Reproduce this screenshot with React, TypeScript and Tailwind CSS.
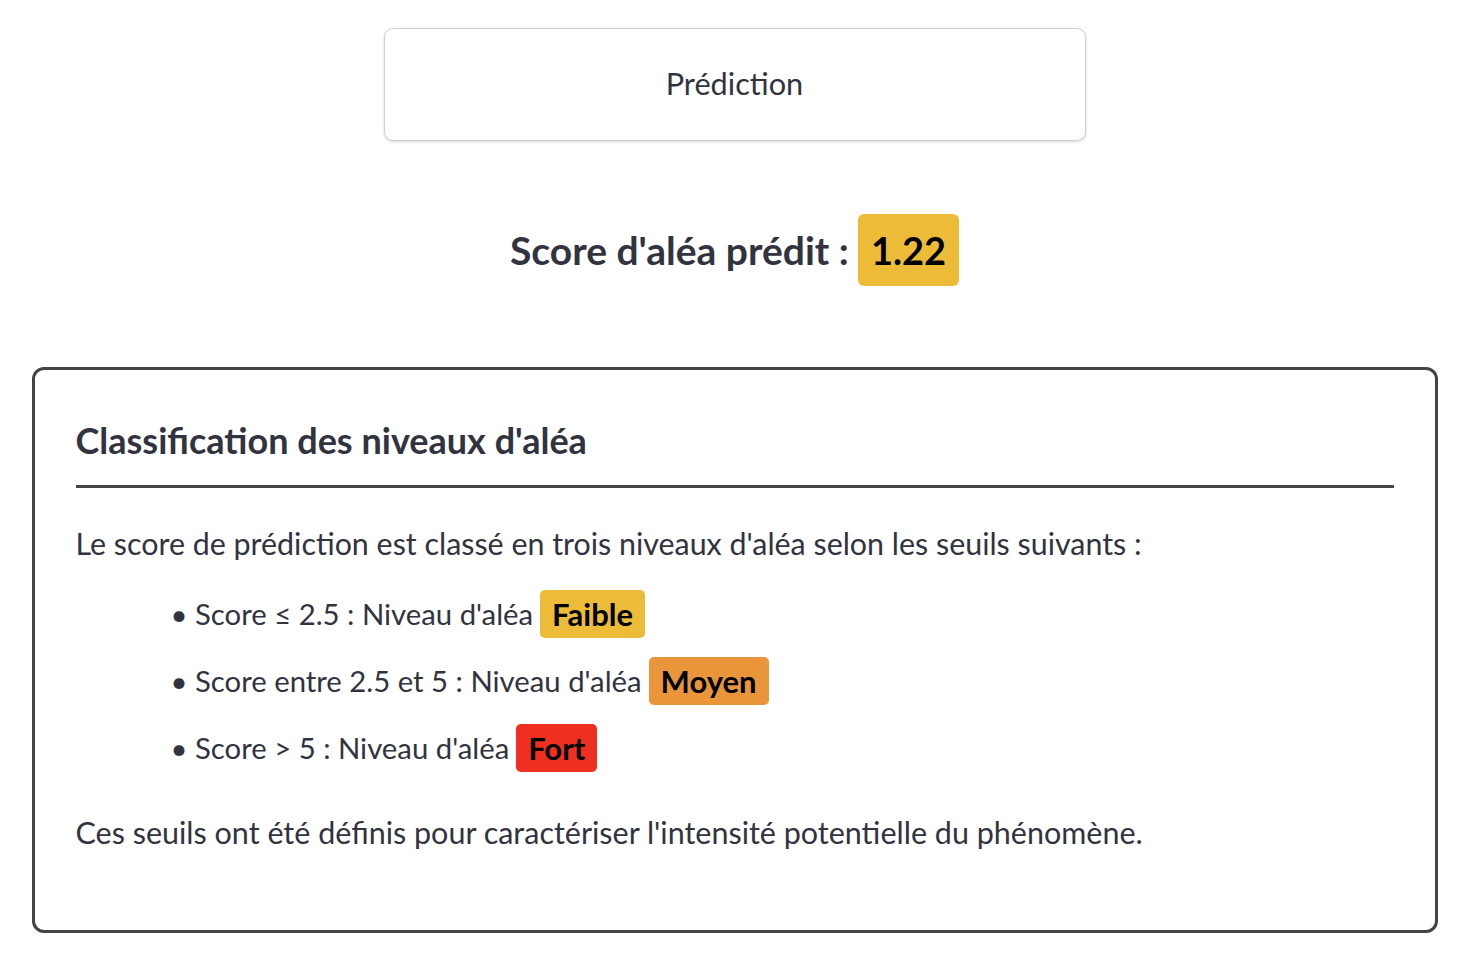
import React from "react";

const font = { fontFamily: "Lato, 'Noto Sans', sans-serif" };

function Badge({ bg, children }: { bg: string; children: React.ReactNode }) {
  return (
    <span className={`${bg} ml-[7px] inline-flex h-[48px] items-center rounded-[5px] px-[12px] text-[31px] font-bold leading-none text-black`}>
      {children}
    </span>
  );
}

export default function App() {
  return (
    <div className="w-full bg-white">
      <div className="flex min-h-[956px] w-[1469px] flex-col items-center pt-[28px] text-[#31333F]" style={font}>
        <div className="flex h-[113px] w-[702px] items-center justify-center rounded-[9px] border border-[#cfd0d3] bg-white text-[30.7px] shadow-[0_1px_3px_rgba(0,0,0,0.16)]">
          Prédiction
        </div>

        <div className="mt-[73px] flex h-[72px] items-center justify-center">
          <span className="text-[39px] font-bold">Score d'aléa prédit :</span>
          <span className="ml-[9px] flex h-[72px] items-center rounded-[6px] bg-[#ECBC39] px-[13px] text-[38px] font-bold text-black">
            1.22
          </span>
        </div>

        <div className="mt-[81px] h-[566px] w-[1406px] rounded-[12px] border-[3px] border-[#444444] px-[41px]">
          <div className="border-b-[3px] border-[#444444] pb-[24px] pt-[49px] text-[36px] font-bold leading-[42px]">
            Classification des niveaux d'aléa
          </div>
          <p className="mt-[34px] text-[30.4px] leading-[42px]">
            Le score de prédiction est classé en trois niveaux d'aléa selon les seuils suivants :
          </p>
          <div className="mt-[26px] flex flex-col gap-[19px] pl-[95px] text-[29.3px]">
            <div className="flex h-[48px] items-center">
              <span>• Score ≤ 2.5 : Niveau d'aléa</span>
              <Badge bg="bg-[#ECBC39]">Faible</Badge>
            </div>
            <div className="flex h-[48px] items-center">
              <span>• Score entre 2.5 et 5 : Niveau d'aléa</span>
              <Badge bg="bg-[#E9963A]">Moyen</Badge>
            </div>
            <div className="flex h-[48px] items-center">
              <span>• Score &gt; 5 : Niveau d'aléa</span>
              <Badge bg="bg-[#EF2F1F]">Fort</Badge>
            </div>
          </div>
          <p className="mt-[39px] text-[30.5px] leading-[42px]">
            Ces seuils ont été définis pour caractériser l'intensité potentielle du phénomène.
          </p>
        </div>
      </div>
    </div>
  );
}
